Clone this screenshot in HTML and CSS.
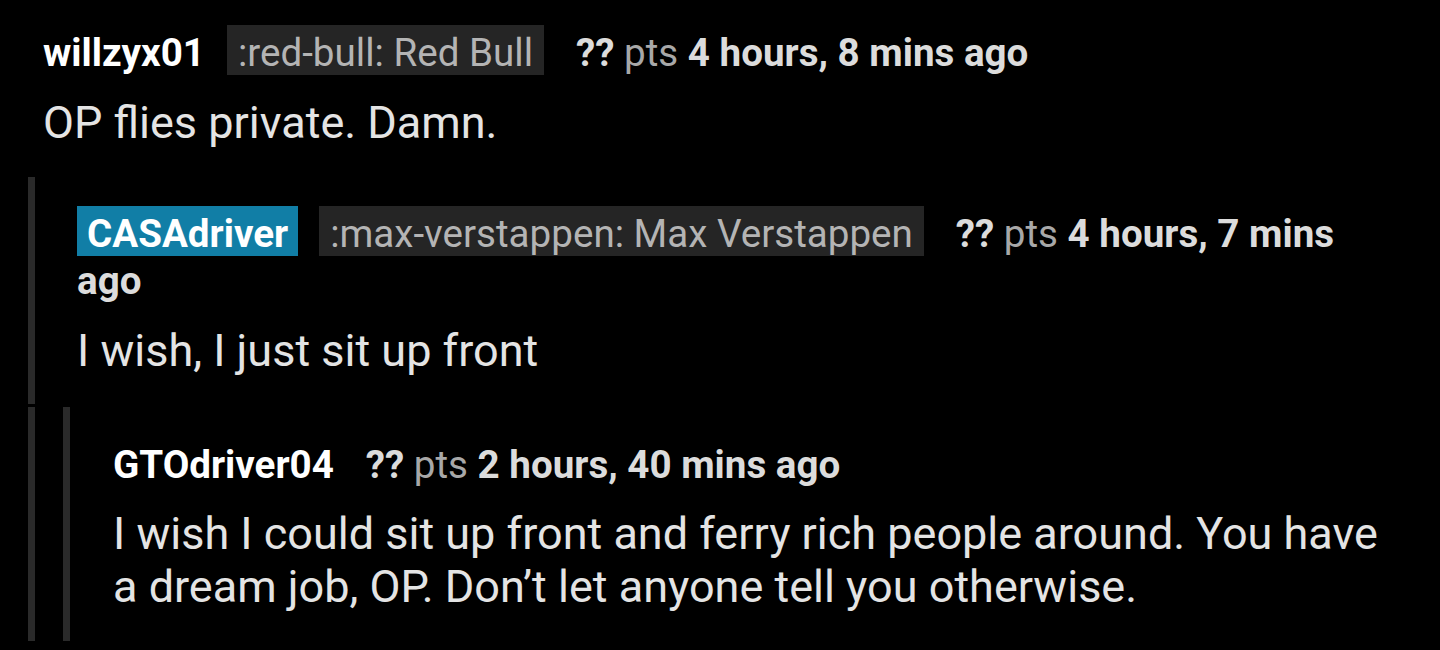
FILE: index.html
```html
<!DOCTYPE html>
<html lang="en">
<head>
<meta charset="utf-8">
<title>Comments</title>
<link rel="stylesheet" href="styles.css">
</head>
<body>
<div class="thread">
  <div class="comment top">
    <div class="meta"><span class="user">willzyx01</span><span class="flair">:red-bull: Red Bull</span><span class="score"><b>??</b> pts </span><span class="time">4 hours, 8 mins ago</span></div>
    <div class="body">OP flies private. Damn.</div>
  </div>
  <div class="replies">
    <div class="comment reply">
      <div class="meta"><span class="user op">CASAdriver</span><span class="flair">:max-verstappen: Max Verstappen</span><span class="score"><b>??</b> pts </span><span class="time">4 hours, 7 mins ago</span></div>
      <div class="body">I wish, I just sit up front</div>
    </div>
    <div class="replies nested">
      <div class="comment reply deep">
        <div class="meta"><span class="user">GTOdriver04</span><span class="score"><b>??</b> pts </span><span class="time">2 hours, 40 mins ago</span></div>
        <div class="body">I wish I could sit up front and ferry rich people around. You have a dream job, OP. Don’t let anyone tell you otherwise.</div>
      </div>
    </div>
  </div>
</div>
</body>
</html>
```
FILE: styles.css
```css
html, body {
  margin: 0;
  padding: 0;
  background: #000;
}
body {
  font-family: Roboto, "Noto Sans", "Liberation Sans", sans-serif;
  color: #e4e4e4;
  width: 1440px;
  height: 650px;
  overflow: hidden;
}
.thread {
  padding: 29px 40px 0 28px;
}
.comment.top {
  padding-left: 15px;
  padding-bottom: 28px;
}
.meta {
  font-size: 38.6px;
  line-height: 47px;
  margin-bottom: 20px;
}
.user {
  font-weight: 700;
  color: #fff;
  margin-right: 22px;
}
.user.op {
  background: #117ea6;
  padding: 5px 10px 0;
  margin-right: 21px;
}
.flair {
  background: #252525;
  color: #b4b4b4;
  padding: 5px 11px 0;
  margin-right: 22px;
}
.score {
  color: #a8a8a8;
  margin-left: 10px;
}
.score b {
  color: #dcdcdc;
  font-weight: 700;
}
.time {
  font-weight: 700;
  color: #dcdcdc;
}
.body {
  font-size: 45px;
  line-height: 53px;
}
.reply {
  border-left: 7px solid #2a2a2a;
  padding: 33px 0 27px 42px;
}
.replies.nested {
  margin-top: 3px;
  border-left: 7px solid #2a2a2a;
  padding-left: 28px;
}
.reply.deep {
  padding: 34px 0 28px 43px;
}
.reply.deep .meta {
  margin-bottom: 19px;
}
```
